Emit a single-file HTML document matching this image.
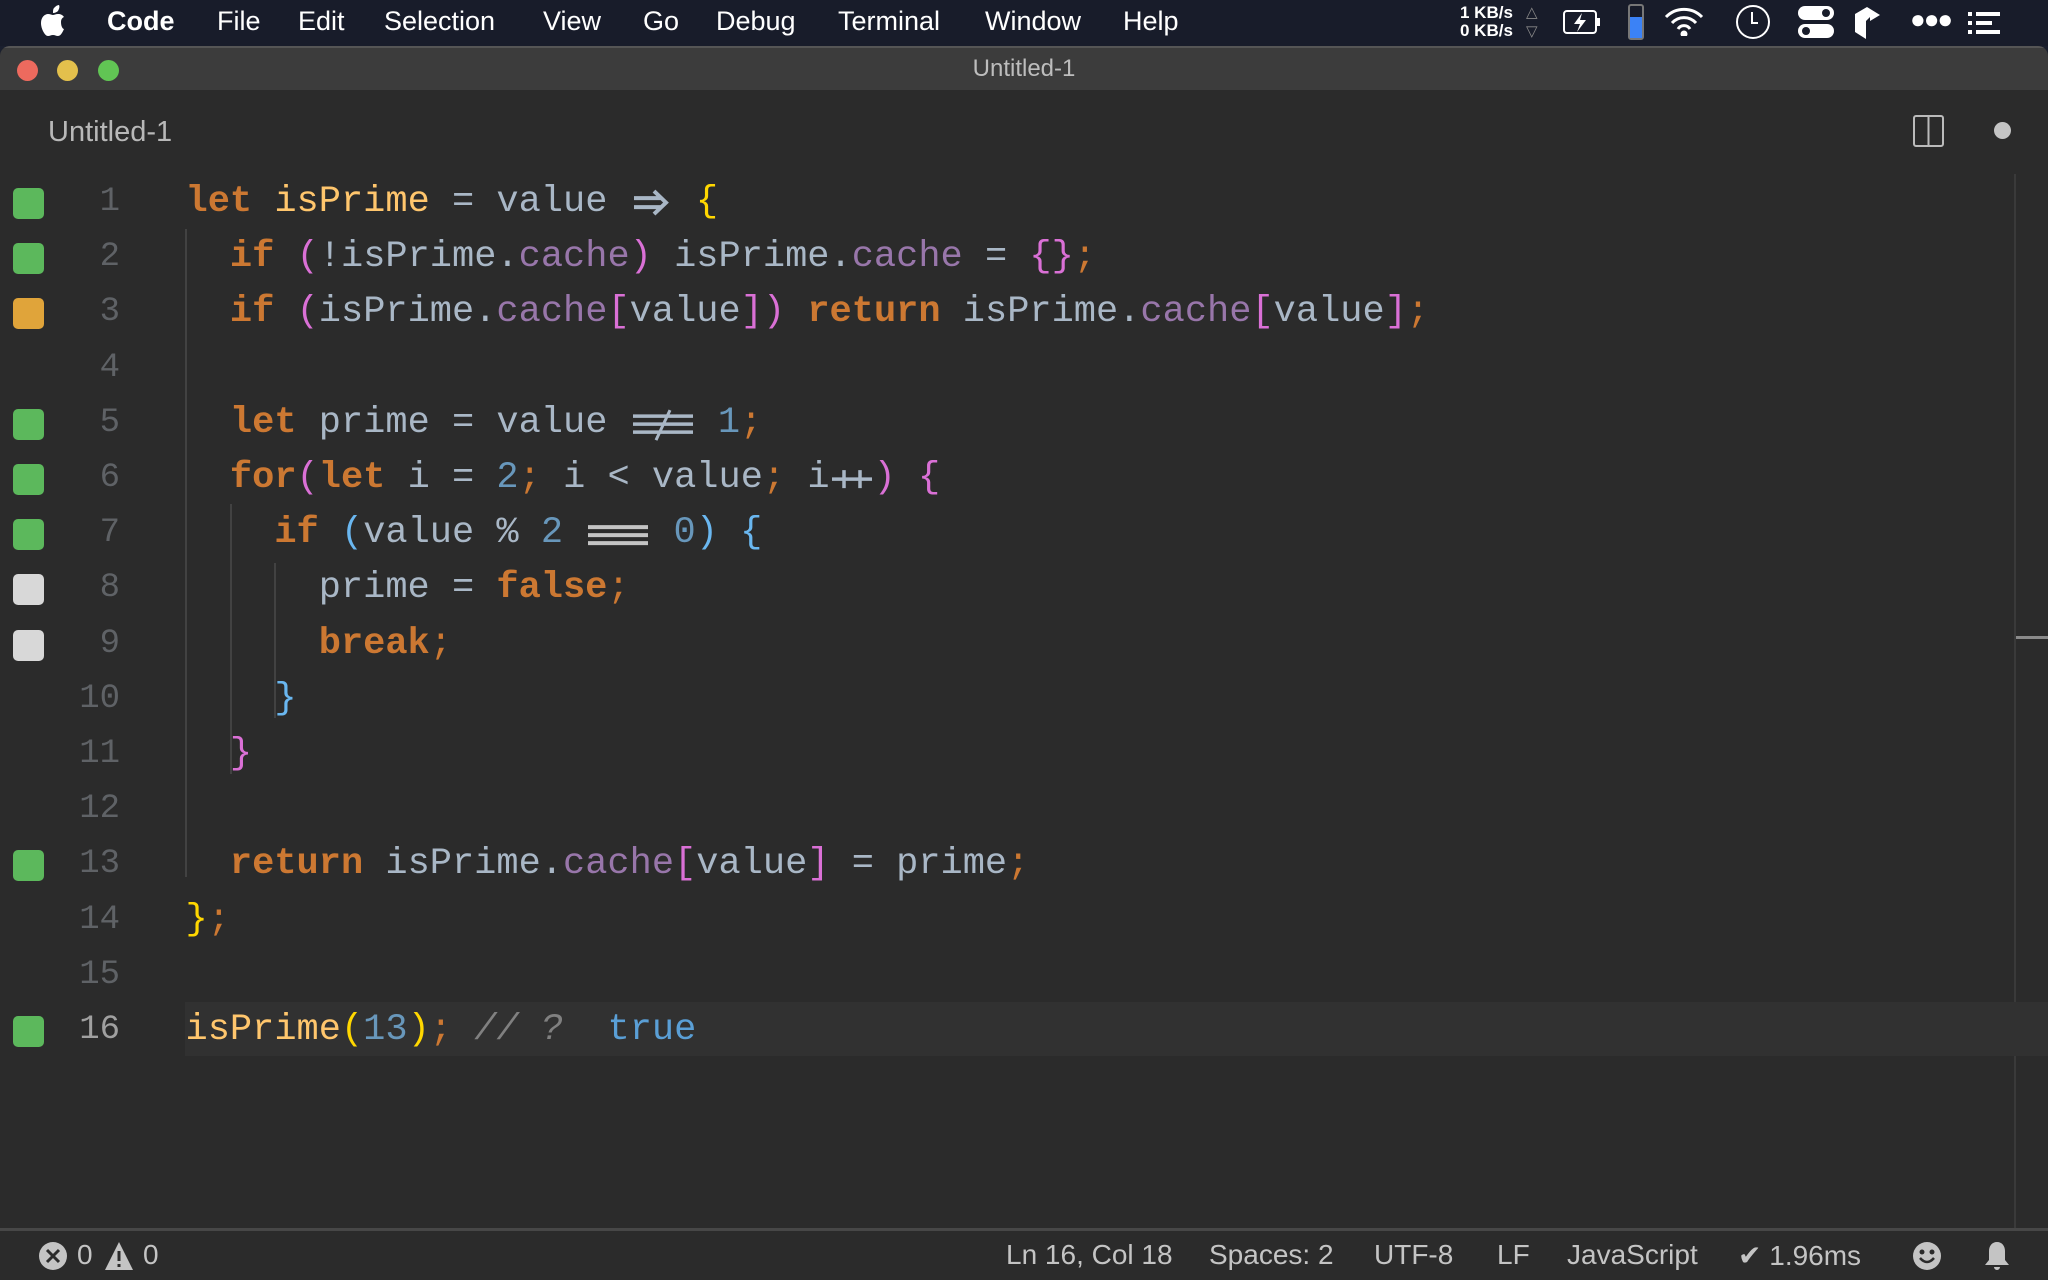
<!DOCTYPE html>
<html><head><meta charset="utf-8"><style>
*{margin:0;padding:0;box-sizing:border-box}
body{width:2048px;height:1280px;background:#1a1f2e;overflow:hidden;position:relative;font-family:"Liberation Sans",sans-serif}
#menubar{position:absolute;left:0;top:0;width:2048px;height:46px;background:#181c2a;color:#fff;font-size:27px}
#menubar span{position:absolute;top:6px}
#win{position:absolute;left:0;top:46px;width:2048px;height:1234px;background:#2b2b2b;border-radius:10px 10px 0 0;overflow:hidden}
#title{position:absolute;left:0;top:0;width:100%;height:44px;background:#3c3c3c;border-top:2px solid #555}
.tl{position:absolute;top:12px;width:21px;height:21px;border-radius:50%}
#code{position:absolute;left:0;top:129px;width:100%;font-family:"Liberation Mono",monospace;font-size:37px}
.ln{position:absolute;left:0;width:100%;height:55.2px;line-height:55.2px;white-space:pre}
.num{position:absolute;right:1928px;color:#5f6266;font-size:34px}
.sq{position:absolute;left:13px;top:13px;width:31px;height:31px;border-radius:5px}
.c{position:absolute;left:185.5px;color:#a9b7c6}
.k{color:#cc7832;font-weight:bold}.kw{color:#cc7832}
.f{color:#ffc66d}.p{color:#9876aa}.n{color:#6897bb}.y{color:#ffd700}.m{color:#da70d6}.b{color:#6ab7f0}
.cm{color:#808080;font-style:italic}.t{color:#5a9fd6}
.lig{display:inline-block;vertical-align:top;height:55.2px}
.g{position:absolute;width:2px;background:#424242}
#status{position:absolute;left:0;top:1182px;width:100%;height:52px;background:#2b2b2b;border-top:3px solid #474747;color:#c4c4c4;font-size:28px}
#status span{position:absolute;top:8px}
</style></head><body>
<div id="menubar">
<span style="left:40px;top:4px"><svg width="30" height="34" viewBox="0 0 30 34"><path d="M21 18c0-4 3-5 3-5-2-3-5-3-6-3-2 0-4 1-5 1s-3-1-5-1c-3 0-7 3-7 9 0 6 4 13 7 13 2 0 3-1 5-1s3 1 5 1c3 0 5-5 6-7-1 0-3-2-3-7zM18 7c1-2 2-4 1-6-2 0-4 2-5 3-1 1-1 3-1 5 2 0 4-1 5-2z" fill="#fff"/></svg></span>
<span style="left:107px;font-weight:bold">Code</span>
<span style="left:217px">File</span><span style="left:298px">Edit</span><span style="left:384px">Selection</span><span style="left:543px">View</span><span style="left:643px">Go</span><span style="left:716px">Debug</span><span style="left:838px">Terminal</span><span style="left:985px">Window</span><span style="left:1123px">Help</span>
<span style="left:1460px;top:4px;font-size:17px;line-height:18px;font-weight:bold">1 KB/s<br>0 KB/s</span>
<span style="left:1526px;top:3px;font-size:15px;line-height:19px;color:#888">△<br>▽</span>
<span style="left:1563px;top:9px"><svg width="40" height="28"><rect x="1" y="2" width="32" height="22" rx="3" fill="none" stroke="#fff" stroke-width="2"/><rect x="34" y="9" width="3" height="8" fill="#fff"/><path d="M19 4l-8 11h6l-3 8 9-12h-6z" fill="#fff"/></svg></span>
<span style="left:1628px;top:4px"><svg width="16" height="36"><rect x="1" y="1" width="14" height="34" rx="2" fill="none" stroke="#777" stroke-width="2"/><rect x="2" y="13" width="12" height="21" fill="#3b82f6"/></svg></span>
<span style="left:1664px;top:6px"><svg width="40" height="30" fill="none" stroke="#fff" stroke-width="3"><path d="M2 11a25 25 0 0 1 36 0M8 17a16 16 0 0 1 24 0M14 23a7 7 0 0 1 12 0"/><circle cx="20" cy="28" r="2" fill="#fff"/></svg></span>
<span style="left:1735px;top:4px"><svg width="36" height="36" fill="none" stroke="#fff" stroke-width="2"><circle cx="18" cy="18" r="16"/><path d="M17 8v11h6"/></svg></span>
<span style="left:1798px;top:6px"><svg width="36" height="32"><rect x="0" y="0" width="36" height="14" rx="7" fill="#fff"/><circle cx="28" cy="7" r="4" fill="#181c2a"/><rect x="0" y="18" width="36" height="14" rx="7" fill="#fff"/><circle cx="8" cy="25" r="4" fill="#181c2a"/></svg></span>
<span style="left:1853px;top:6px"><svg width="30" height="34"><path d="M2 8l12-7 13 8-10 6v-4l-4 4v18l-11-7z" fill="#fff"/></svg></span>
<span style="left:1910px;top:4px;font-size:26px;letter-spacing:-2px">●●●</span>
<span style="left:1968px;top:12px"><svg width="32" height="24" fill="#fff"><rect x="0" y="0" width="4" height="4"/><rect x="8" y="0" width="24" height="4"/><rect x="0" y="9" width="4" height="4"/><rect x="8" y="9" width="16" height="4"/><rect x="0" y="18" width="4" height="4"/><rect x="8" y="18" width="24" height="4"/></svg></span>
</div>
<div id="win">
<div id="title">
<div class="tl" style="left:17px;background:#ed6a5e"></div>
<div class="tl" style="left:57px;background:#e3c04c"></div>
<div class="tl" style="left:98px;background:#61c554"></div>
<div style="position:absolute;left:0;width:100%;top:7px;text-align:center;color:#bdbdbd;font-size:24px">Untitled-1</div>
</div>
<div style="position:absolute;left:48px;top:70px;color:#b8b8b8;font-size:29px">Untitled-1</div>
<svg style="position:absolute;left:1913px;top:69px" width="32" height="32"><rect x="1" y="1" width="29" height="30" rx="2" fill="none" stroke="#bbb" stroke-width="2"/><path d="M15.5 1v30" stroke="#bbb" stroke-width="2"/></svg>
<div style="position:absolute;left:1994px;top:76px;width:17px;height:17px;border-radius:50%;background:#c4c4c4"></div>
<div style="position:absolute;left:2014px;top:128px;width:2px;height:1054px;background:#3a3a3a"></div>
<div style="position:absolute;left:2016px;top:590px;width:32px;height:3px;background:#8a8a8a"></div>
<div style="position:absolute;left:185px;top:956px;width:1863px;height:54px;background:#313131"></div>
<div class="g" style="left:185px;top:183px;height:648px"></div>
<div class="g" style="left:230px;top:458px;height:270px"></div>
<div class="g" style="left:274px;top:517px;height:155px"></div>
<div id="code">
<div class="ln" style="top:0"><div class="sq" style="background:#5cb85c"></div><span class="num">1</span><span class="c"><span class="k">let</span> <span class="f">isPrime</span> = value <svg class="lig" width="44" height="55" viewBox="0 0 44 55"><path d="M4 23h28M4 32h28M24 16l12 11.5-12 11.5" stroke="#a9b7c6" stroke-width="4" fill="none"/></svg> <span class="y">{</span></span></div>
<div class="ln" style="top:55.2px"><div class="sq" style="background:#5cb85c"></div><span class="num">2</span><span class="c">  <span class="k">if</span> <span class="m">(</span>!isPrime.<span class="p">cache</span><span class="m">)</span> isPrime.<span class="p">cache</span> = <span class="m">{}</span><span class="kw">;</span></span></div>
<div class="ln" style="top:110.4px"><div class="sq" style="background:#e0a43a"></div><span class="num">3</span><span class="c">  <span class="k">if</span> <span class="m">(</span>isPrime.<span class="p">cache</span><span class="m">[</span>value<span class="m">])</span> <span class="k">return</span> isPrime.<span class="p">cache</span><span class="m">[</span>value<span class="m">]</span><span class="kw">;</span></span></div>
<div class="ln" style="top:165.6px"><span class="num">4</span></div>
<div class="ln" style="top:220.8px"><div class="sq" style="background:#5cb85c"></div><span class="num">5</span><span class="c">  <span class="k">let</span> prime = value <svg class="lig" width="66" height="55" viewBox="0 0 66 55"><path d="M3 20h60M3 28h60M3 36h60" stroke="#a9b7c6" stroke-width="3.5"/><path d="M40 14l-14 30" stroke="#a9b7c6" stroke-width="3"/></svg> <span class="n">1</span><span class="kw">;</span></span></div>
<div class="ln" style="top:276px"><div class="sq" style="background:#5cb85c"></div><span class="num">6</span><span class="c">  <span class="k">for</span><span class="m">(</span><span class="k">let</span> i = <span class="n">2</span><span class="kw">;</span> i &lt; value<span class="kw">;</span> i<svg class="lig" width="44" height="55" viewBox="0 0 44 55"><path d="M2 28h40M14 19v18M30 19v18" stroke="#a9b7c6" stroke-width="3.5"/></svg><span class="m">)</span> <span class="m">{</span></span></div>
<div class="ln" style="top:331.2px"><div class="sq" style="background:#5cb85c"></div><span class="num">7</span><span class="c">    <span class="k">if</span> <span class="b">(</span>value % <span class="n">2</span> <svg class="lig" width="66" height="55" viewBox="0 0 66 55"><path d="M3 21h60M3 29h60M3 37h60" stroke="#c4c4c4" stroke-width="4"/></svg> <span class="n">0</span><span class="b">)</span> <span class="b">{</span></span></div>
<div class="ln" style="top:386.4px"><div class="sq" style="background:#d8d8d8"></div><span class="num">8</span><span class="c">      prime = <span class="k">false</span><span class="kw">;</span></span></div>
<div class="ln" style="top:441.6px"><div class="sq" style="background:#d8d8d8"></div><span class="num">9</span><span class="c">      <span class="k">break</span><span class="kw">;</span></span></div>
<div class="ln" style="top:496.8px"><span class="num">10</span><span class="c">    <span class="b">}</span></span></div>
<div class="ln" style="top:552px"><span class="num">11</span><span class="c">  <span class="m">}</span></span></div>
<div class="ln" style="top:607.2px"><span class="num">12</span></div>
<div class="ln" style="top:662.4px"><div class="sq" style="background:#5cb85c"></div><span class="num">13</span><span class="c">  <span class="k">return</span> isPrime.<span class="p">cache</span><span class="m">[</span>value<span class="m">]</span> = prime<span class="kw">;</span></span></div>
<div class="ln" style="top:717.6px"><span class="num">14</span><span class="c"><span class="y">}</span><span class="kw">;</span></span></div>
<div class="ln" style="top:772.8px"><span class="num">15</span></div>
<div class="ln" style="top:828px"><div class="sq" style="background:#5cb85c"></div><span class="num" style="color:#a0a0a0">16</span><span class="c"><span class="f">isPrime</span><span class="y">(</span><span class="n">13</span><span class="y">)</span><span class="kw">;</span> <span class="cm">// ?</span>  <span class="t">true</span></span></div>
</div>
<div id="status">
<span style="left:38px;top:10px"><svg width="30" height="30"><circle cx="15" cy="15" r="14" fill="#c4c4c4"/><path d="M9 9l12 12M21 9l-12 12" stroke="#2b2b2b" stroke-width="3"/></svg></span>
<span style="left:77px">0</span>
<span style="left:104px;top:10px"><svg width="30" height="30"><path d="M15 1l14 28H1z" fill="#c4c4c4"/><path d="M15 10v10M15 23v3" stroke="#2b2b2b" stroke-width="3"/></svg></span>
<span style="left:143px">0</span>
<span style="left:1006px">Ln 16, Col 18</span>
<span style="left:1209px">Spaces: 2</span>
<span style="left:1374px">UTF-8</span>
<span style="left:1497px">LF</span>
<span style="left:1567px">JavaScript</span>
<span style="left:1738px">✔ 1.96ms</span>
<span style="left:1912px;top:10px"><svg width="30" height="30"><circle cx="15" cy="15" r="14" fill="#c4c4c4"/><circle cx="10" cy="11" r="2.5" fill="#2b2b2b"/><circle cx="20" cy="11" r="2.5" fill="#2b2b2b"/><path d="M8 17q7 8 14 0" stroke="#2b2b2b" stroke-width="2.5" fill="none"/></svg></span>
<span style="left:1983px;top:9px"><svg width="28" height="32"><path d="M14 2c-5 0-8 4-8 9v9l-4 5h24l-4-5v-9c0-5-3-9-8-9zM11 27a3 3 0 0 0 6 0z" fill="#c4c4c4"/></svg></span>
</div>
</div>
</body></html>
